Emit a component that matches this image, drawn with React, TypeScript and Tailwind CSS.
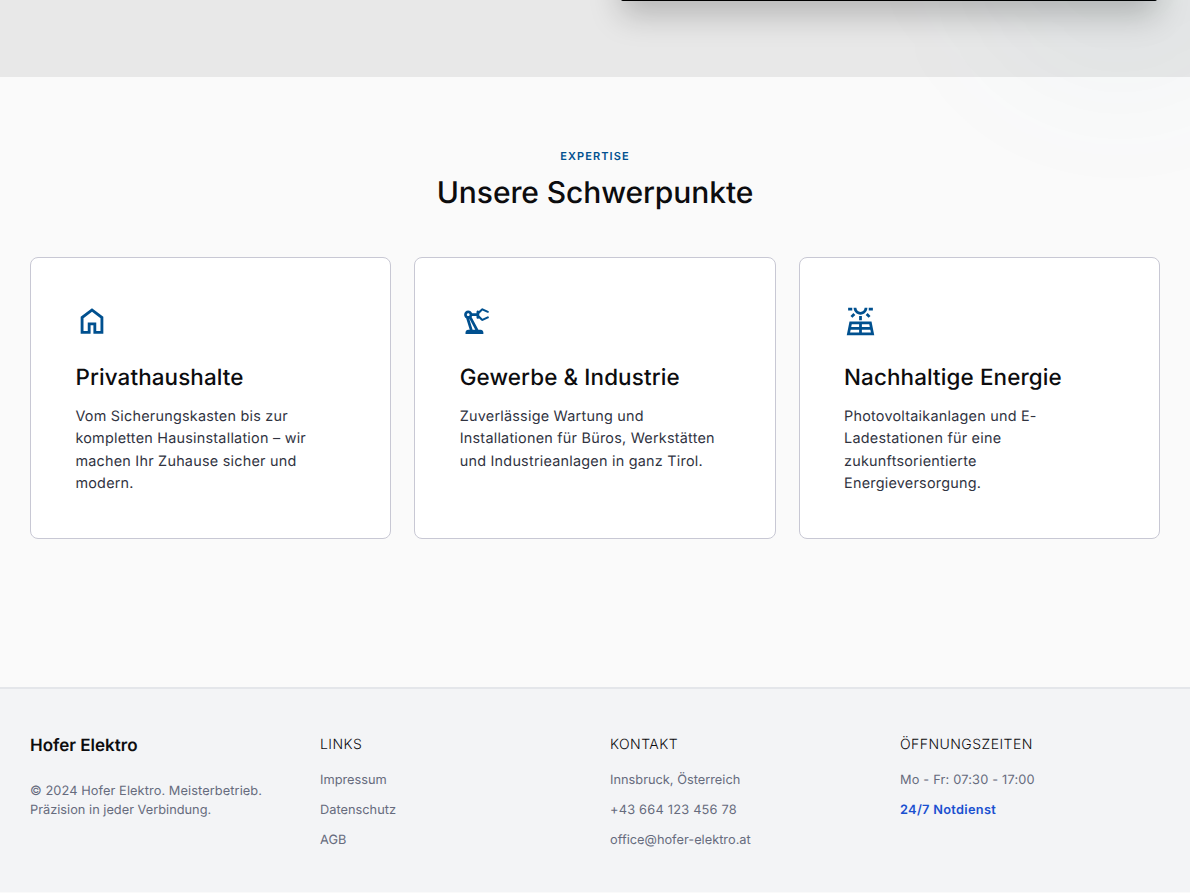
import React from 'react';
import { MdOutlinePrecisionManufacturing, MdOutlineSolarPower } from 'react-icons/md';

const HomeIcon = () => (
  <svg viewBox="0 -960 960 960" className="w-[34px] h-[34px] mt-px" fill="currentColor">
    <path d="M240-200h120v-240h240v240h120v-360L480-740 240-560v360Zm-80 80v-480l320-240 320 240v480H520v-240h-80v240H160Z" />
  </svg>
);

const cards = [
  {
    title: 'Privathaushalte',
    text: 'Vom Sicherungskasten bis zur kompletten Hausinstallation – wir machen Ihr Zuhause sicher und modern.',
    icon: <HomeIcon />,
  },
  {
    title: 'Gewerbe & Industrie',
    text: 'Zuverlässige Wartung und Installationen für Büros, Werkstätten und Industrieanlagen in ganz Tirol.',
    icon: <MdOutlinePrecisionManufacturing size={33} className="mt-[2px]" />,
  },
  {
    title: 'Nachhaltige Energie',
    text: 'Photovoltaikanlagen und E-Ladestationen für eine zukunftsorientierte Energieversorgung.',
    icon: <MdOutlineSolarPower size={33} className="mt-[2px]" />,
  },
];

const App = () => {
  return (
    <div className="relative min-h-[893px] bg-[#fafafa] overflow-hidden antialiased [text-rendering:geometricPrecision] font-['Inter',sans-serif]">
      {/* Rest of the hero, scrolled almost out of view */}
      <div className="relative h-[77px] bg-[#e8e8e8]">
        <div className="absolute top-[-200px] left-[621px] w-[536px] h-[201px] bg-black rounded-[2px] shadow-[0_14px_32px_rgba(0,0,0,0.22)]" />
      </div>

      <section className="bg-[#fafafa] px-[30px] pt-[71px] pb-[148px]">
        <div className="text-center">
          <p className="text-[11px] leading-4 font-semibold tracking-[0.1em] text-[#00508f]">EXPERTISE</p>
          <h2 className="mt-[10px] text-[30px] leading-[38px] font-medium tracking-[-0.1px] text-[#0c0c0e]">Unsere Schwerpunkte</h2>
        </div>
        <div className="mt-[45px] grid grid-cols-3 gap-[23px]">
          {cards.map((card) => (
            <div key={card.title} className="h-[282px] bg-white border border-[#c8c8d4] rounded-lg px-[44.4px] pt-[45px]">
              <div className="flex h-[35px] text-[#00508f]">{card.icon}</div>
              <h3 className="mt-[26px] text-[22.4px] leading-7 font-medium tracking-[0.12px] text-[#0c0c0e]">{card.title}</h3>
              <p className="mt-[14px] text-[14.4px] leading-[22.4px] tracking-[0.23px] text-[#30333f]">{card.text}</p>
            </div>
          ))}
        </div>
      </section>

      <footer className="bg-[#f3f4f6] border-t-2 border-[#e4e6ea] h-[205px] px-[30px] pt-[46px] grid grid-cols-4 gap-[30px]">
        <div>
          <div className="pt-px text-[17px] leading-5 font-semibold text-[#0c0c0e]">Hofer Elektro</div>
          <p className="mt-[26px] text-[12.8px] leading-[19px] text-[#666b7d]">
            <span className="tracking-[0.08px]">© 2024 Hofer Elektro. Meisterbetrieb.</span>
            <br />
            Präzision in jeder Verbindung.
          </p>
        </div>
        <div>
          <h4 className="text-sm leading-5 font-light tracking-[0.45px] text-[#0c0c0e]">LINKS</h4>
          <ul className="mt-[16px] flex flex-col gap-[11px] text-[12.8px] leading-[19px] text-[#666b7d]">
            <li>Impressum</li>
            <li>Datenschutz</li>
            <li>AGB</li>
          </ul>
        </div>
        <div>
          <h4 className="text-sm leading-5 font-light tracking-[0.45px] text-[#0c0c0e]">KONTAKT</h4>
          <ul className="mt-[16px] flex flex-col gap-[11px] text-[12.8px] leading-[19px] text-[#666b7d]">
            <li>Innsbruck, Österreich</li>
            <li className="tracking-[0.22px]">+43 664 123 456 78</li>
            <li>office@hofer-elektro.at</li>
          </ul>
        </div>
        <div>
          <h4 className="text-sm leading-5 font-light tracking-[0.45px] text-[#0c0c0e]">ÖFFNUNGSZEITEN</h4>
          <ul className="mt-[16px] flex flex-col gap-[11px] text-[12.8px] leading-[19px] text-[#666b7d]">
            <li className="tracking-[0.18px]">Mo - Fr: 07:30 - 17:00</li>
            <li className="font-semibold tracking-[0.3px] text-[#1a50d0]">24/7 Notdienst</li>
          </ul>
        </div>
      </footer>

      {/* Faint glow lying over the hero edge */}
      <div className="absolute top-[-205px] left-[970px] w-[300px] h-[300px] rounded-full bg-[#00508f]/[0.03] blur-3xl pointer-events-none" />
    </div>
  );
};

export default App;
